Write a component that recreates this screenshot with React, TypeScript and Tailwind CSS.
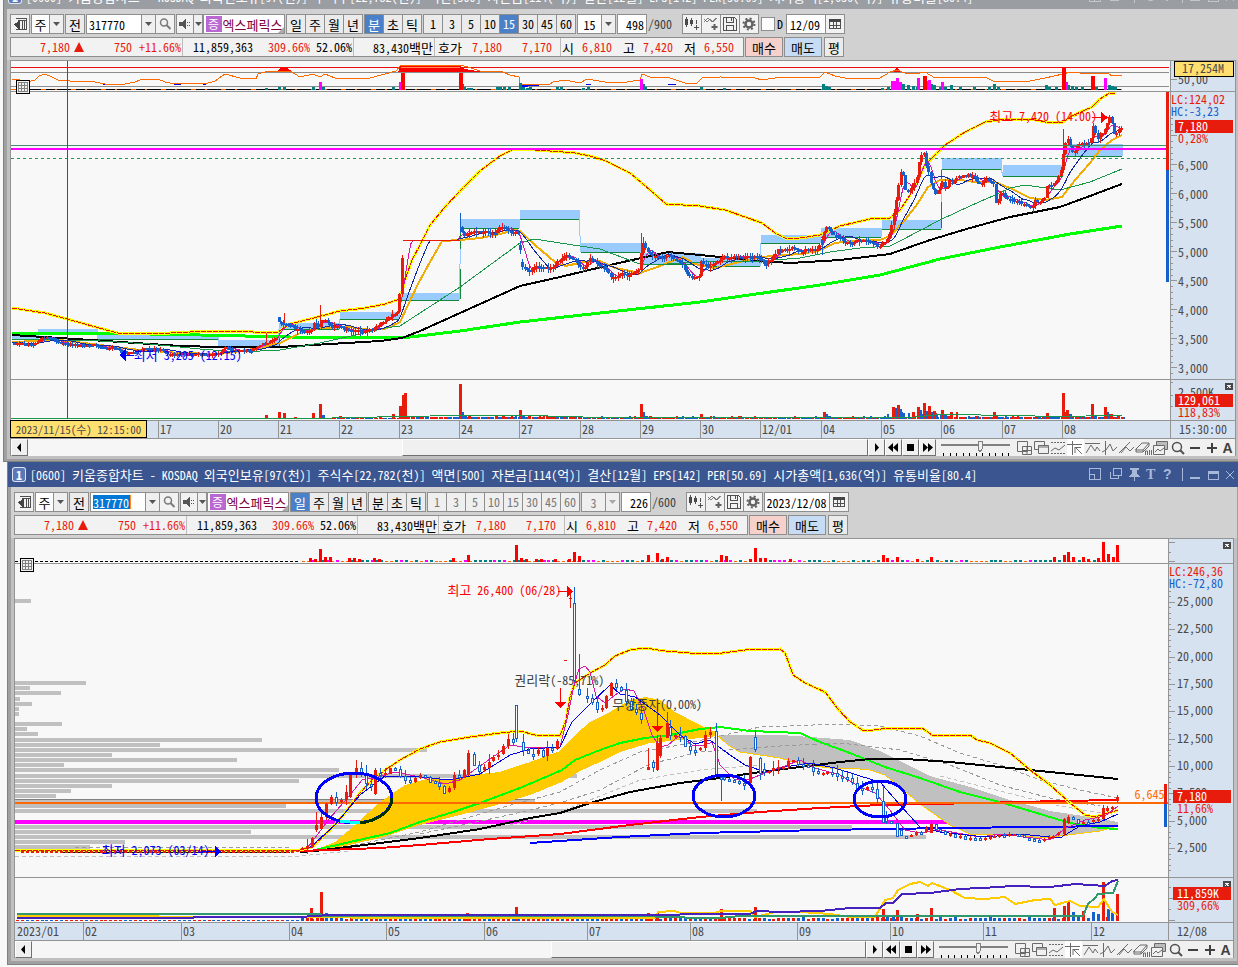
import React from 'react';

type Bar = [number, number];

const MONO = "font-['Noto_Sans_Mono_CJK_KR','Noto_Sans_CJK_KR',monospace]";

const RED = '#e81c0c';
const BLUE = '#1460cc';

const parse = (s: string): Bar[] => s.split(' ').map((p) => p.split(',').map(Number) as Bar);
const at = (pts: Bar[], x: number) => {
  for (let i = 1; i < pts.length; i++) {
    if (x <= pts[i][0]) {
      const [x0, y0] = pts[i - 1];
      const [x1, y1] = pts[i];
      return y0 + ((y1 - y0) * (x - x0)) / (x1 - x0 || 1);
    }
  }
  return pts[pts.length - 1][1];
};
const noise = (i: number, k: number) => {
  const v = Math.sin(i * 12.9898 + k * 78.233) * 43758.5453;
  return (v - Math.floor(v)) * 2 - 1;
};

function Ko({ children }: { children: string }) {
  return (
    <>
      {children.split(/([가-힣]+)/).map((part, i) =>
        i % 2 ? <span key={i} className="text-[13px]">{part}</span> : part,
      )}
    </>
  );
}

function Band({ points }: { points: string }) {
  return (
    <g fill="none">
      <polyline points={points} stroke="#ffff00" strokeWidth="3" />
      <polyline points={points} stroke="#e01010" strokeWidth="1" strokeDasharray="5 1" />
    </g>
  );
}

function Bars({ data, base, color, w = 3 }: { data: string; base: number; color: string; w?: number }) {
  return (
    <g fill={color}>
      {parse(data).map(([x, h], i) => (
        <rect key={i} x={x - 1} y={base - h} width={w} height={h} />
      ))}
    </g>
  );
}

/* ---------- 15 minute chart ---------- */

const intraday = parse(
  '12,343 20,343 35,344 39,339 47,337 55,340 62,343 75,345 97,345 100,347 118,348 120,354 123,352 135,352 145,348 160,349 168,354 190,354 215,354 222,352 225,346 232,350 250,351 257,346 268,342 278,337 279,318 283,325 287,323 295,328 303,331 312,331 314,322 318,326 320,323 324,320 330,326 338,326 345,330 360,331 372,330 380,324 388,318 397,312 399,300 401,270 403,240 459,240 460,218 462,231 465,236 468,232 480,231 490,233 497,231 500,227 505,229 512,232 519,232 520,250 521,265 530,271 535,266 545,268 553,268 556,262 562,258 566,255 572,257 577,263 583,270 590,258 596,264 604,268 610,276 615,278 621,273 627,276 634,272 640,270 641,248 643,244 648,253 655,257 662,257 670,256 680,262 687,273 692,278 700,276 701,262 708,266 716,262 722,257 735,257 748,256 760,258 762,264 766,264 772,257 777,250 785,250 792,248 800,252 808,249 818,250 820,244 826,226 832,233 838,237 845,243 852,243 862,239 870,241 878,246 885,241 888,235 891,228 893,215 896,200 899,180 901,168 903,175 905,190 910,192 915,182 918,175 920,155 924,153 925,160 928,172 932,187 936,194 942,182 946,190 950,180 956,178 962,176 970,175 980,182 985,180 992,182 995,190 996,208 1000,192 1006,196 1012,200 1020,202 1028,205 1032,208 1036,200 1044,200 1047,185 1052,185 1058,178 1061,170 1064,145 1068,140 1073,155 1078,145 1085,144 1090,145 1093,125 1098,138 1103,135 1108,118 1110,117 1113,130 1115,138 1118,130 1122,127',
);
const STEP = 2.32;
const closes: Bar[] = Array.from({ length: 479 }, (_, i) => {
  const x = 12 + i * STEP;
  const amp = x > 402 && x < 460 ? 0 : x < 280 ? 0.7 : x > 880 ? 2 : 1.2;
  return [x, at(intraday, x) + noise(i, 1) * amp] as Bar;
});
const average = (src: Bar[], n: number) =>
  src
    .map(([x], i) => {
      const part = src.slice(Math.max(0, i - n + 1), i + 1);
      return `${x.toFixed(1)},${(part.reduce((a, p) => a + p[1], 0) / part.length).toFixed(1)}`;
    })
    .join(' ');
/* overnight gaps: the first bar of these sessions has a small body */
const isGap = (x: number) => [279, 460, 520].some((g) => Math.abs(g - x) < 3.5);

const clouds = [
  [12, 38, 334, 339], [38, 97, 329, 334], [98, 218, 334, 339], [219, 278, 340, 346], [279, 339, 323, 329],
  [340, 399, 312, 319], [401, 459, 293, 300], [461, 519, 219, 228], [520, 579, 210, 219], [581, 640, 243, 252],
  [641, 700, 253, 264], [701, 760, 258, 266], [761, 820, 235, 243], [821, 881, 228, 237], [882, 941, 220, 229],
  [942, 1001, 158, 169], [1003, 1061, 165, 176], [1063, 1122, 144, 156],
];

const ribbon =
  '12,79 20,80 27,82 35,80 39,76 45,74 52,77 58,80 70,81 95,82 105,84 120,85 135,82 140,80 158,79 165,82 175,84 190,83 205,84 215,81 222,76 225,74 240,78 256,79 258,74 268,71 290,71 300,77 313,74 320,77 325,74 335,78 350,79 370,78 385,74 396,71 400,66 403,65 460,65 468,67 480,71 500,71 510,75 519,77 520,85 525,84 550,84 553,82 565,80 580,83 587,79 605,82 620,83 640,80 642,74 650,77 670,78 685,83 697,83 702,78 720,77 755,78 762,80 775,78 800,77 820,77 825,72 835,76 850,79 880,78 890,72 897,70 905,73 915,74 925,72 935,78 960,77 985,77 995,82 1005,81 1030,81 1045,78 1063,74 1070,72 1090,74 1108,73 1112,76 1122,75';

function IntradayPlot() {
  const cloudLine = clouds.map(([a, b, , y]) => `${a},${y} ${b},${y}`).join(' ');
  return (
    <svg viewBox="11 61 1159 359" preserveAspectRatio="none" className="block h-[359px] w-full" shapeRendering="crispEdges" role="img" aria-label="15분 차트">
      <path d="M11 67.5H1169" stroke="#e81010" />
      <path d="M11 72.5H1169M11 86.5H1169" stroke="#8c8c8c" />
      <path d="M11 89.5H1122" stroke="#000" />
      <path d="M11 89.5H1122" stroke="#ff6a00" strokeDasharray="5 9 2 14" />
      <polygon points="398,72 401,65 459,65 462,68 470,70 485,72" fill="#ff0000" />
      <polygon points="277,71 281,68 287,68 292,71" fill="#ff0000" />
      <polygon points="891,72 897,68 902,72" fill="#ff0000" />
      <path d="M401 67.5H460" stroke="#ff8a50" />
      <polygon points="520,84 552,84 535,86 521,87" fill="#0000ff" />
      <path d="M103 84.5h4m8 0h6m53 0h7m22 0h3M586 84.5h5M668 84.5h8" stroke="#0000e0" />
      <polyline points={ribbon} fill="none" stroke="#ff6a00" />
      <Bars base={90} color="#008080" data="266,2 279,3 284,3 313,3 323,3 393,3 462,6 464,3 468,2 471,2 497,3 500,3 504,3 509,3 520,7 523,3 527,2 530,3 557,3 561,3 583,2 588,3 643,6 645,3 701,3 724,2 823,6 826,4 829,3 882,2 888,3 903,6 908,5 913,4 917,3 931,6 934,5 940,3 945,3 951,5 960,3 974,3 989,3 994,6 998,3 1046,5 1049,3 1056,3 1068,5 1072,4 1076,3 1082,3 1096,3 1109,5 1112,4 1115,3" />
      <Bars base={90} color="#ff00ff" data="320,8 400,8 641,11 892,9 895,9 897,12 900,8 918,12 926,9 929,10 942,8 1066,8 1105,12" />
      <Bars base={90} color="#ff0000" w={4} data="402,17 460,17 924,14 1063,23 1092,14" />
      <path d="M11 91.5H1170M11 379.5H1170" stroke="#949494" />

      {clouds.map(([a, b, t, y]) => (
        <rect key={a} x={a} y={t} width={b - a + 1} height={y - t} fill="#9acbff" />
      ))}
      <polyline points={cloudLine} fill="none" stroke="#9acbff" />
      {clouds.map(([a, b, , y]) => (
        <path key={b} d={`M${a} ${y + 0.5}H${b}`} stroke="#108838" />
      ))}
      <path d="M279.500 329v18M460.500 229v20m0 20v30M941.500 170v12m0 20v26M1062.500 157v20" stroke="#108838" />
      <polyline points="12,333 100,333 200,335 290,337 402,338 460,331 520,322 600,313 700,302 820,285 880,275 940,259 1000,247 1070,234 1122,226" fill="none" stroke="#00ff00" strokeWidth="3" />
      <polyline points="12,335 60,338 120,342 180,346 220,347 280,347 330,344 380,341 402,338 420,331 460,313 520,286 560,277 610,265 650,256 668,252 700,255 760,261 790,263 840,260 890,254 930,240 970,228 1010,217 1060,207 1090,196 1122,184" fill="none" stroke="#000" strokeWidth="2" />
      <polyline points="12,342 60,340 100,345 140,350 180,353 220,354 260,348 280,343 300,333 320,328 350,327 370,330 385,329 400,322 408,305 418,284 430,262 442,241 460,240 480,238 500,234 515,230 520,231 535,245 555,262 565,266 585,262 600,261 615,268 640,273 660,266 682,257 695,264 715,268 735,263 760,257 800,254 818,251 835,243 860,240 880,240 890,236 905,220 918,203 928,187 940,180 960,180 975,182 995,182 1010,188 1030,198 1045,200 1062,197 1075,180 1090,163 1100,150 1112,140 1122,135" fill="none" stroke="#f0ac00" strokeWidth="2" />
      <polyline points="12,339 100,341 150,344 200,349 240,352 280,350 320,343 360,334 385,328 400,326 420,313 460,287 490,265 520,243 534,239 560,243 600,249 637,263 650,265 700,262 760,261 800,258 830,252 860,248 890,246 900,241 940,220 970,206 995,195 1010,188 1025,185 1060,190 1090,182 1122,169" fill="none" stroke="#189848" />
      <Band points="12,308 45,313 67,319 110,331 118,333 170,333 210,331 235,331 270,333 278,332 290,324 310,319 325,315 340,311 365,308 385,304 400,299 405,280 412,260 420,245 430,225 445,207 460,191 480,171 500,156 512,150 520,149 550,151 575,153 590,156 606,161 630,173 650,190 666,204 700,206 725,210 745,217 762,223 775,233 787,239 800,238 820,235 840,226 870,219 890,218 900,210 912,192 925,165 945,145 965,132 985,122 1005,119 1030,119 1045,122 1063,122 1070,117 1085,110 1092,107 1100,99 1108,94 1115,93" />
      <polyline points={average(closes, 5)} fill="none" stroke="#d818a8" />
      <polyline points={average(closes, 13)} fill="none" stroke="#1428a0" />
      {closes.map(([x, c], i) => {
        if (i === 0 || (x > 404 && x < 460)) return null;
        const prev = closes[i - 1][1];
        const o = isGap(x) && Math.abs(c - prev) > 7 ? c - 5 : prev;
        const up = c <= o;
        const top = Math.min(c, o);
        const h = Math.max(2, Math.abs(c - o));
        const wick = Math.abs(noise(i, 3)) * (x < 280 ? 2 : 4);
        return (
          <g key={i} fill={up ? RED : BLUE}>
            <rect x={x} y={top - wick} width="1" height={h + wick * 2} />
            <rect x={x - 1} y={top} width="3" height={h} />
          </g>
        );
      })}
      <path d="M402.500 240.500H460M266.500 333v12M284.500 313v10M320.500 305v20M641.500 233v20" stroke={RED} fill="none" />
      <path d="M460.500 213v20M643.500 237v12M822.500 240v15M1063.500 129v30" stroke={BLUE} />
      <path d="M11 145.500H1166" stroke="#409070" />
      <path d="M11 149H1166" stroke="#ff00ff" strokeWidth="2" />
      <path d="M11 158.500H1166" stroke="#209858" strokeDasharray="3 3" />
      <rect x="1166" y="92" width="3" height="78" fill={RED} />
      <rect x="1166" y="170" width="3" height="112" fill={BLUE} />
      <path d="M1092 117.500h12" stroke="#ff0000" />
      <path d="M1101 112v11l7-5.500z" fill="#ff0000" />
      <path d="M126 355.500h8" stroke="#0000ff" />
      <path d="M126 349v12l-7-6z" fill="#0000ff" />

      {closes.map(([x], i) =>
        i % 2 ? null : <rect key={i} x={x} y={x > 400 ? 417 : 418} width="4" height={x > 400 ? 2 : 1} fill={noise(i, 8) > 0 ? RED : BLUE} />,
      )}
      {closes.map(([x], i) => {
        if (x < 460 || i % 3 === 0) return null;
        const h = Math.abs(noise(i, 5)) * (x > 880 && x < 960 ? 6 : 2) + 1;
        return <rect key={i} x={x} y={419 - h} width="2" height={h} fill={noise(i, 6) > 0 ? RED : BLUE} />;
      })}
      <Bars base={419} color={BLUE} data="287,1 323,4 462,7 465,3 523,4 643,7 646,3 826,5 829,3 895,11 900,10 903,6 920,9 927,8 931,7 936,4 945,4 1065,7 1070,5 1095,4 1107,7 1110,5" />
      <Bars base={419} color={RED} data="257,1 266,4 279,7 284,6 295,2 313,6 320,15 340,3 380,3 393,5 400,13 403,24 405,26 460,35 469,4 496,4 503,3 520,9 529,3 641,15 650,3 701,5 724,2 761,2 775,2 824,7 893,12 898,14 913,7 918,12 924,16 929,13 934,8 942,9 951,7 994,7 1047,6 1063,26 1067,9 1092,15 1105,12 1111,5 1118,3" />
      <polyline points="11,418.500 310,418.500 400,416.500 460,415.500 530,415.500 600,417.500 820,417.500 910,417.500 940,414.500 1020,415.500 1050,416.500 1122,415.500" fill="none" stroke="#189848" />
      <path d="M67.500 61V419" stroke="#e81010" />
    </svg>
  );
}

/* ---------- daily chart ---------- */

const daily = parse(
  '17,851 290,851 300,849 306,847 311,838 316,828 321,815 326,805 331,797 336,802 341,800 345,797 350,774 354,768 359,769 364,780 369,790 374,772 379,774 384,776 389,767 394,768 399,776 404,777 408,786 413,779 418,775 423,777 433,782 438,783 443,792 448,791 453,775 458,778 463,773 468,753 472,760 477,772 482,768 487,765 492,758 497,756 502,748 507,738 511,746 516,738 521,749 526,750 531,757 536,746 541,758 546,748 551,749 556,747 574,682 579,692 584,700 589,698 594,708 599,711 604,703 609,688 613,679 618,690 623,691 628,707 638,714 643,723 646,768 653,770 658,742 662,737 667,723 672,742 677,730 682,741 688,750 697,751 702,745 706,731 711,732 716,773 721,780 726,778 731,781 741,783 746,785 750,758 755,760 760,772 765,773 770,770 775,766 785,767 790,757 795,761 800,765 806,764 814,773 820,775 824,772 829,771 835,775 843,778 848,778 853,785 863,790 868,786 873,790 878,800 883,822 888,820 893,822 898,836 903,836 912,834 917,830 922,832 931,824 936,829 941,832 950,835 961,837 970,839 980,839 990,836 1000,834 1015,835 1025,838 1040,840 1050,838 1058,834 1064,820 1068,816 1078,824 1083,822 1090,820 1098,819 1103,809 1108,808 1113,806 1117,799',
);
const dayCloses: Bar[] = Array.from({ length: 225 }, (_, i) => {
  const x = 17 + i * 4.912;
  return [x, at(daily, x) + (x > 390 ? noise(i, 2) * 1.2 : 0)] as Bar;
});

/* x, high, low, body top, body bottom, rising */
const bigDays: [number, number, number, number, number, boolean][] = [
  [312, 837, 848, 838, 847, true], [316, 812, 832, 825, 830, true], [321, 810, 830, 817, 829, true],
  [326, 803, 820, 804, 817, true], [350, 772, 798, 775, 797, true], [375, 768, 795, 770, 794, true],
  [516, 705, 742, 705, 738, false], [468, 750, 776, 753, 775, true], [574, 587, 682, 603, 680, false],
  [579, 654, 696, 689, 694, false], [570, 590, 608, 598, 599, true], [565, 660, 661, 660, 661, true],
  [648, 748, 770, 767, 770, true], [653, 760, 772, 762, 767, false], [657, 735, 771, 743, 770, true],
  [667, 712, 738, 723, 738, true], [716, 723, 775, 731, 774, false], [721, 776, 801, 777, 779, false],
  [750, 756, 786, 757, 783, true], [755, 730, 752, 737, 749, false], [760, 757, 780, 758, 773, false],
  [883, 786, 823, 801, 822, false], [897, 820, 837, 823, 836, false], [931, 820, 833, 824, 833, true],
  [1064, 818, 836, 819, 834, true], [1103, 805, 820, 808, 819, true], [1117, 795, 803, 797, 801, true],
];

const profile =
  '601,31 683,86 688,30 693,61 699,20 704,32 709,19 714,19 724,62 729,27 734,38 740,262 745,160 750,427 755,112 760,237 765,64 770,339 776,577 781,299 786,112 791,71 796,56 801,535 806,286 811,757 827,852 832,251 837,926 842,125 847,90';

function DailyPlot() {
  return (
    <svg viewBox="15 539 1153 383" preserveAspectRatio="none" className="block h-[383px] w-full" shapeRendering="crispEdges" role="img" aria-label="일봉 차트">
      <path d="M15 561.500H300" stroke="#000" strokeDasharray="3 2" />
      {dayCloses.map(([x], i) => {
        if (x < 298) return null;
        const c = ['#008080', '#ff6a00', '#ff00ff', '#008080', '#ff6a00'][Math.floor((noise(i, 4) + 1) * 2.49)];
        const h = c === '#ff6a00' ? 1 : 2;
        return <rect key={i} x={x} y={562 - h} width="3" height={h} fill={c} />;
      })}
      <Bars base={562} color="#ff0000" data="310,4 315,3 320,13 325,5 330,5 349,4 354,4 359,3 374,4 379,3 453,4 468,7 516,17 521,4 526,3 536,3 541,3 555,3 569,3 574,10 579,6 648,7 657,9 662,3 667,5 721,7 726,6 750,3 755,14 760,4 765,4 790,3 883,7 887,4 897,5 917,3 931,5 1054,5 1064,7 1068,10 1073,5 1083,5 1088,3 1098,4 1103,20 1108,8 1113,5 1117,17" />
      <path d="M15 563.500H1168M15 877.500H1168" stroke="#949494" />
      {parse(profile).map(([y, end]) => (
        <rect key={y} x="15" y={y - 2} width={end - 15} height="4" fill="#c0c0c0" />
      ))}
      <path d="M15 799.500H535" stroke="#808080" />
      <path d="M15 822H955" stroke="#ff00ff" strokeWidth="4" />
      <polygon points="315,850 335,842 355,825 380,802 405,785 430,778 450,780 470,775 500,772 530,762 560,751 575,735 590,722 610,712 630,700 645,697 660,700 675,712 700,725 718,733 718,736 690,739 650,743 620,752 600,762 580,771 562,782 530,795 500,804 460,815 420,825 380,838 340,847" fill="#ffcb00" />
      <polygon points="718,735 740,735 780,735 810,737 850,740 880,751 930,776 970,787 1010,800 1050,811 1090,817 1118,822 1118,826 1100,831 1060,836 1040,838 1010,834 970,834 950,825 920,804 900,787 885,775 870,770 850,768 830,768 800,764 780,758 760,755 740,752 728,745" fill="#c0c0c0" />
      <polyline points="715,733 728,745 740,752 760,755 780,758 800,764 830,768 850,768 870,770 885,775 900,787 920,804 950,825 970,834 1010,834 1040,838 1060,836 1100,831 1118,826" fill="none" stroke="#ffcb00" />
      <g fill="none" stroke="#9a9a9a" strokeDasharray="4 3">
        <polyline points="340,848 420,832 500,808 560,792 600,770 640,752 680,745 760,727 840,724 880,726 920,736 960,753 1000,765 1040,780 1080,790 1118,798" />
        <polyline points="420,834 500,817 560,803 600,790 650,764 700,752 780,746 840,743 900,750 950,765 1000,785 1050,798 1100,806" />
        <polyline points="420,838 520,823 570,808 640,780 700,770 760,765" stroke="#c0c0c0" />
        <polyline points="75,847 290,847" />
        <polyline points="15,856 300,856 350,851" stroke="#c0c0c0" />
        <polyline points="940,776 1000,791 1060,806 1118,816" stroke="#c0c0c0" />
      </g>
      <polyline points="315,850 350,842 390,833 420,822 450,813 480,803 520,788 562,770 575,760 600,750 620,743 645,738 670,735 700,729 720,727 750,731 800,733 820,742 850,753 885,767 920,778 960,792 1000,802 1040,814 1070,823 1100,828 1118,829" fill="none" stroke="#00ff00" strokeWidth="2" />
      <polyline points="300,852 315,851 380,843 420,838 480,829 530,818 560,813 590,803 630,792 680,783 720,778 760,772 800,767 840,762 870,759 905,759 950,762 1000,767 1050,772 1118,779" fill="none" stroke="#000" strokeWidth="2" />
      <polyline points="15,851 300,851 380,848 420,845 490,839 560,834 630,825 700,817 760,812 820,808 880,805 980,803 1060,801 1118,800" fill="none" stroke="#ff0000" strokeWidth="2" />
      <polyline points="530,843 620,837 700,833 820,830 950,828 1118,826" fill="none" stroke="#0000ff" strokeWidth="2" />
      <polyline points="60,852.500 290,852.500" fill="none" stroke="#000" />
      <path d="M15 803H1168" stroke="#ff6a00" strokeWidth="2" />
      <Band points="15,850 300,850 312,847 330,830 345,813 360,793 372,780 385,770 400,760 420,749 440,742 470,737 500,733 520,731 535,735 560,736 566,720 570,697 575,683 590,673 605,665 615,656 630,650 645,648 665,651 690,653 715,654 745,650 780,649 785,653 793,675 805,683 825,692 838,709 850,722 864,731 890,728 922,728 932,735 970,735 977,740 990,743 1010,753 1030,770 1050,785 1070,803 1085,815 1095,817 1105,814 1118,810" />
      <polyline points="308,847 330,818 350,795 362,780 375,778 395,772 420,777 445,784 460,780 480,766 510,745 530,748 560,747 568,715 574,685 579,669 585,666 590,672 596,696 605,703 615,695 625,689 634,691 643,708 652,735 660,747 668,745 680,735 692,745 705,745 712,742 720,765 735,780 750,779 770,771 785,766 800,760 815,768 840,775 860,787 875,793 890,810 905,830 920,833 940,830 980,837 1000,834 1050,840 1066,828 1085,820 1105,816 1118,806" fill="none" stroke="#d818a8" />
      <polyline points="308,849 335,825 360,795 385,776 420,777 450,780 480,774 510,755 530,749 560,747 572,722 590,704 610,685 620,694 635,697 660,715 680,735 695,744 710,740 730,755 745,765 765,772 785,767 810,763 835,768 860,776 880,782 900,805 920,827 940,832 985,837 1020,834 1060,838 1080,826 1100,822 1118,814" fill="none" stroke="#0000e0" />
      {dayCloses.map(([x, c], i) => {
        if (i === 0 || (x > 558 && x < 582) || (x > 642 && x < 660) || (x > 713 && x < 724)) return null;
        if (bigDays.some((b) => Math.abs(b[0] - x) < 2.4)) return null;
        const o = dayCloses[i - 1][1];
        const up = c <= o;
        const top = Math.round(Math.min(c, o));
        const h = Math.max(2, Math.round(Math.abs(c - o)));
        const wick = x < 300 ? 0 : Math.abs(noise(i, 9)) * (x > 900 ? 2 : 8);
        const px = Math.round(x);
        return (
          <g key={i}>
            <rect x={px} y={top - wick} width="1" height={h + wick * 1.7} fill={up ? RED : BLUE} />
            {up ? (
              <rect x={px - 1} y={top} width="3" height={h} fill={RED} />
            ) : (
              <rect x={px - 0.5} y={top + 0.5} width="2" height={h} fill="#f8f8f8" stroke={BLUE} />
            )}
          </g>
        );
      })}
      {bigDays.map(([x, hi, lo, t, b, up]) => (
        <g key={x}>
          <rect x={x} y={hi} width="1" height={lo - hi} fill={up ? RED : BLUE} />
          {up ? <rect x={x - 1} y={t} width="3" height={b - t} fill={RED} /> : <rect x={x - 0.5} y={t + 0.5} width="2" height={b - t} fill="#f8f8f8" stroke={BLUE} />}
        </g>
      ))}
      <g fill="none" stroke="#0000ff" strokeWidth="3">
        <ellipse cx="354" cy="798" rx="38" ry="25" />
        <ellipse cx="724" cy="796" rx="31" ry="21" />
        <ellipse cx="880" cy="799" rx="26" ry="18" />
      </g>
      <path d="M392 798a38 25 0 0 1-34 25" fill="none" stroke="#003000" strokeWidth="3" />
      <path d="M340 821l20 2" stroke="#00ffff" strokeWidth="3" />
      <path d="M558 591.500h12M560.500 688v15M657.500 705v24" stroke="#ff0000" />
      <path d="M567 586v11l6-5.500zM555 702h11l-5.500 6zM652 726h11l-5.500 6z" fill="#ff0000" />
      <path d="M201 851.500h18" stroke="#0000ff" />
      <path d="M215 846v11l6-5.500z" fill="#0000ff" />
      <rect x="1164" y="784" width="3" height="20" fill={RED} />
      <rect x="1164" y="804" width="3" height="23" fill={BLUE} />

      {dayCloses.map(([x], i) => {
        const h = x < 298 ? 1 : Math.round(2 + Math.abs(noise(i, 7)) * 2);
        return <rect key={i} x={x - 1} y={921 - h} width="3" height={h} fill={noise(i, 6) > 0 ? RED : BLUE} />;
      })}
      <Bars base={921} color={BLUE} data="326,8 331,7 887,6 893,4 1073,9 1078,5 1093,9 1098,7 1108,12 1112,9" />
      <Bars base={921} color={RED} data="311,13 321,29 467,8 516,14 648,8 657,8 721,12 755,14 883,12 897,11 917,7 931,13 1054,13 1064,15 1068,19 1083,10 1103,39 1117,27" />
      <g fill="none" strokeWidth="2">
        <polyline stroke="#ffcb00" points="17,916 300,917 400,918 655,918 658,912 675,911 680,913 715,913 720,911 750,911 755,917 775,912 800,912 830,914 850,917 875,917 885,900 893,898 898,890 910,884 920,882 928,886 932,883 950,890 965,898 985,899 1005,897 1015,904 1035,900 1050,899 1055,905 1070,901 1080,906 1098,907 1104,899 1112,912 1118,915" />
        <polyline stroke="#30986c" points="17,914 320,914 322,916 640,916 700,918 720,918 740,916 1083,916 1088,904 1095,898 1098,894 1113,893 1118,881" />
        <polyline stroke="#4422bb" points="17,918 193,918 194,917 300,917 330,915 560,915 660,915 700,914 750,914 757,911 780,912 820,911 850,908 880,908 886,903 893,903 902,894 930,893 960,889 1000,887 1010,886 1050,887 1075,884 1105,886 1112,881 1118,880" />
      </g>
    </svg>
  );
}

/* ---------- value axes ---------- */

function CloseMark({ x, y }: { x: number; y: number }) {
  return (
    <g>
      <rect x={x} y={y} width="8" height="7" fill="#484848" />
      <path d={`M${x + 2} ${y + 2}l4 3m0-3l-4 3`} stroke="#f0f0f0" />
    </g>
  );
}

function AxisSvg({ top, height, children }: { top: number; height: number; children: React.ReactNode }) {
  return (
    <svg viewBox={`0 ${top} 64 ${height}`} width="64" height={height} className={`block shrink-0 bg-[#d7e2f0] ${MONO}`} fontSize="12" shapeRendering="crispEdges">
      {children}
    </svg>
  );
}

function IntradayAxis() {
  return (
    <AxisSvg top={61} height={359}>
      <path d="M0 91.500H64M0 379.500H64" stroke="#949494" />
      <path d="M0 79.500h6M0 395.500h2M0 406.500h2M0 382.500h2" stroke="#949494" />
      <text x="7" y="84" fill="#4a4a4a">50,00</text>
      <rect x="3.500" y="61.500" width="59" height="15" fill="#ffdf70" stroke="#000" />
      <text x="11" y="73" fill="#4a4a4a">17,254M</text>
      <text x="0" y="104" fill={RED}>LC:124,02</text>
      <text x="0" y="116" fill={BLUE}>HC:-3,23</text>
      {Array.from({ length: 45 }, (_, i) => (
        <path key={i} d={`M0 ${Math.round(118 + i * 5.8)}.500h${i % 5 === 3 ? 6 : 2}`} stroke="#949494" />
      ))}
      {['6,500', '6,000', '5,500', '5,000', '4,500', '4,000', '3,500', '3,000'].map((t, i) => (
        <text key={t} x="7" y={170 + i * 29} fill="#4a4a4a">{t}</text>
      ))}
      <rect x="4" y="120" width="58" height="13" fill={RED} />
      <text x="7" y="131" fill="#fff">7,180</text>
      <text x="7" y="143" fill={RED}>0,28%</text>
      <text x="7" y="397" fill="#4a4a4a">2,500K</text>
      <CloseMark x={54} y={383} />
      <rect x="4" y="394" width="58" height="13" fill={RED} />
      <text x="7" y="405" fill="#fff">129,061</text>
      <text x="7" y="417" fill={RED}>118,83%</text>
    </AxisSvg>
  );
}

function DailyAxis() {
  return (
    <AxisSvg top={539} height={383}>
      <path d="M0 563.500H64M0 877.500H64" stroke="#949494" />
      <path d="M0 542.500h6M0 552.500h2M0 561.500h6M0 887.500h2M0 898.500h6M0 909.500h2M0 920.500h6" stroke="#949494" />
      <CloseMark x={54} y={542} />
      <text x="0" y="576" fill={RED}>LC:246,36</text>
      <text x="0" y="588" fill={BLUE}>HC:-72,80</text>
      {Array.from({ length: 52 }, (_, i) => (
        <path key={i} d={`M0 ${Math.round(591 + i * 5.47)}.500h${i % 5 === 2 ? 6 : 2}`} stroke="#949494" />
      ))}
      {['25,000', '22,500', '20,000', '17,500', '15,000', '12,500', '10,000', '7,500', '5,000', '2,500'].map((t, i) => (
        <text key={t} x="8" y={606 + Math.round(i * 27.35)} fill="#4a4a4a">{t}</text>
      ))}
      <rect x="4" y="790" width="58" height="13" fill={RED} />
      <text x="8" y="801" fill="#fff">7,180</text>
      <text x="8" y="813" fill={RED}>11,66%</text>
      <CloseMark x={54} y={881} />
      <rect x="4" y="887" width="58" height="13" fill={RED} />
      <text x="8" y="898" fill="#fff">11,859K</text>
      <text x="8" y="910" fill={RED}>309,66%</text>
    </AxisSvg>
  );
}

/* ---------- toolbar ---------- */

function Svg({ children, w = 16, label }: { children: React.ReactNode; w?: number; label?: string }) {
  return (
    <svg width={w} height="16" viewBox={`0 0 ${w} 16`} fill="none" stroke="#505050" shapeRendering="crispEdges" aria-label={label} className="shrink-0">
      {children}
    </svg>
  );
}

const BOX = 'flex h-5 shrink-0 items-center justify-center border border-[#8e8e8e]';
const CELL = '-ml-px first:ml-0';

function Arrow({ dim = false, w = 'w-[15px]' }: { dim?: boolean; w?: string }) {
  return (
    <button aria-label="목록" className={`${BOX} ${CELL} ${w} bg-[#efefef]`}>
      <svg width="7" height="4" viewBox="0 0 7 4" className="shrink-0"><path d="M0 0h7L3.500 4z" fill={dim ? '#a8a8a8' : '#555'} /></svg>
    </button>
  );
}

function Choice({ items, active, dim }: { items: string[]; active?: string; dim?: boolean }) {
  return (
    <div className="flex">
      {items.map((t) => (
        <button key={t} className={`${BOX} ${CELL} w-5 ${t === active ? 'bg-[#4a80c8] text-white' : dim ? 'bg-[#efefef] text-[#777]' : 'bg-[#ebebeb]'}`}>
          <Ko>{t}</Ko>
        </button>
      ))}
    </div>
  );
}

type Mode = { daily: boolean };

function Toolbar({ daily: d }: Mode) {
  return (
    <div className={`flex items-center text-[12px] leading-none text-black ${MONO}`}>
      <button aria-label="패널" className={`${BOX} w-5 bg-[#f2f2f2]`}>
        <Svg><path d="M4 2.500h10v11H4M6 4.500h8M10.500 5v8M12.500 5v8" /><path d="M8 4v10L2 8.500z" fill="#444" stroke="none" /></Svg>
      </button>
      <div className="ml-px flex">
        <button className={`${BOX} w-[19px] bg-white`}><Ko>주</Ko></button>
        <Arrow />
      </div>
      <button className={`${BOX} ml-px w-5 bg-[#ebebeb]`}><Ko>전</Ko></button>
      <div className="ml-px flex">
        <label className={`${BOX} w-14 bg-white`}>
          <input aria-label="종목코드" defaultValue="317770" className={d ? 'mr-3 h-[14px] w-[38px] border-r border-[#ff8a20] bg-[#0078d7] text-white' : 'mr-3 h-[14px] w-[38px] bg-white'} />
        </label>
        <Arrow />
        <button aria-label="검색" className={`${BOX} ${CELL} w-5 bg-[#f2f2f2]`}>
          <svg width="14" height="14" viewBox="0 0 14 14" fill="none" stroke="#7a7a7a" className="shrink-0"><circle cx="6" cy="5.500" r="3.500" strokeWidth="1.500" /><path d="M8.500 8l4 4" strokeWidth="2" /></svg>
        </button>
      </div>
      <div className="ml-px flex">
        <button aria-label="소리" className={`${BOX} w-[18px] bg-[#f2f2f2]`}>
          <Svg w={14}><path d="M1 6h3l4-4v12l-4-4H1z" fill="#555" stroke="none" /><path d="M9 6.500h4M9 9.500h4" strokeDasharray="1 1" /></Svg>
        </button>
        <Arrow w="w-[10px]" />
      </div>
      <div className={`${BOX} relative w-[82px] gap-px bg-white`}>
        <span className="flex h-4 w-4 shrink-0 items-center justify-center bg-[#b868d0] text-white">증</span>
        <span className="text-[13px] text-[#800040]">엑스페릭스</span>
        <svg width="6" height="6" className="absolute right-0 bottom-0"><path d="M6 0v6H0z" fill="#aaa" /></svg>
      </div>
      <div className="ml-px"><Choice items={['일', '주', '월', '년']} active={d ? '일' : undefined} /></div>
      <div className="ml-px"><Choice items={['분', '초', '틱']} active={d ? undefined : '분'} /></div>
      <div className="ml-px"><Choice items={['1', '3', '5', '10', '15', '30', '45', '60']} active={d ? undefined : '15'} dim={d} /></div>
      <div className="ml-px flex">
        <label className={`${BOX} w-[25px] ${d ? 'bg-[#efefef] text-[#777]' : 'bg-white'}`}>
          <input aria-label="주기" defaultValue={d ? '3' : '15'} className="h-[14px] w-4 bg-transparent text-center" />
        </label>
        <Arrow dim={d} />
      </div>
      <label className={`${BOX} ml-px w-[30px] bg-white`}>
        <input aria-label="표시 봉수" defaultValue={d ? '226' : '498'} className="h-[14px] w-6 bg-white text-right" />
      </label>
      <span className="ml-px w-[34px] text-[#404040]">{d ? '/600' : '/900'}</span>
      <div className="flex">
        <button aria-label="봉 추가" className={`${BOX} ${CELL} w-5 bg-[#f2f2f2]`}><Svg><path d="M1 3h3v6H1zM6 4h3v4H6z" fill="#444" stroke="none" /><path d="M2.500 1v10M7.500 2v8M12.500 4v4M12.500 9v5M10 11.500h5" /></Svg></button>
        <button aria-label="지표 추가" className={`${BOX} ${CELL} w-5 bg-[#f2f2f2]`}>
          <svg width="16" height="16" viewBox="0 0 16 16" fill="none" stroke="#606060" className="shrink-0"><path d="M1 6l4-4 4 4 4-4M1 3l3 3 3-3 3 3 4-4" strokeWidth=".8" /><path d="M11.500 8v6M8.500 11h6" strokeWidth="2" /></svg>
        </button>
        <button aria-label="저장" className={`${BOX} ${CELL} w-5 bg-[#f2f2f2]`}><Svg><path d="M1.500 1.500h11l2 2v11h-13zM4.500 2v4h7V2M4.500 14V9h7v5M9.500 2v3" /></Svg></button>
        <button aria-label="설정" className={`${BOX} ${CELL} w-5 bg-[#f2f2f2]`}>
          <svg width="14" height="14" viewBox="0 0 14 14" className="shrink-0"><circle cx="7" cy="7" r="3.500" fill="none" stroke="#606060" strokeWidth="2.500" /><circle cx="7" cy="7" r="5.500" fill="none" stroke="#606060" strokeWidth="2" strokeDasharray="2 2.320" /></svg>
        </button>
      </div>
      {!d && (
        <label className="ml-[2px] flex w-6 items-center gap-[2px]">
          <input type="checkbox" aria-label="D" className="h-[14px] w-[14px] shrink-0 appearance-none border border-[#8e8e8e] bg-white" />
          <span>D</span>
        </label>
      )}
      <div className="ml-px flex">
        <label className={`${BOX} bg-white ${d ? 'w-[66px]' : 'w-10'}`}>
          <input aria-label="날짜" defaultValue={d ? '2023/12/08' : '12/09'} className={`h-[14px] bg-white ${d ? 'w-[61px]' : 'w-8'}`} />
        </label>
        <button aria-label="달력" className={`${BOX} ${CELL} w-5 bg-[#f2f2f2]`}><Svg w={12}><path d="M0.500 4h11v8.500h-11zM1 9.500h10M4.500 6v6M7.500 6v6" /><path d="M0 3h12v3H0z" fill="#444" stroke="none" /></Svg></button>
      </div>
    </div>
  );
}

function Quote() {
  const R = 'text-right text-[#e81c0c]';
  return (
    <div className={`mt-[3px] flex items-center text-[12px] leading-none whitespace-nowrap text-black ${MONO}`}>
      <div className="flex h-5 w-[734px] items-center border border-[#8e8e8e] bg-[#f2f2f2]">
        <span className={`w-[59px] ${R}`}>7,180</span>
        <svg width="10" height="10" className="ml-1"><path d="M5 0l5 10H0z" fill="#e81c0c" /></svg>
        <span className={`w-12 ${R}`}>750</span>
        <span className={`w-[49px] ${R}`}>+11.66%</span>
        <span className="ml-px h-[18px] w-px bg-[#bcbcbc]" />
        <span className="w-[70px] text-right">11,859,363</span>
        <span className={`w-[57px] ${R}`}>309.66%</span>
        <span className="w-[42px] text-right">52.06%</span>
        <span className="ml-px h-[18px] w-px bg-[#bcbcbc]" />
        <span className="w-[79px] text-right"><Ko>83,430백만</Ko></span>
        <span className="ml-px h-[18px] w-px bg-[#bcbcbc]" />
        <span className="ml-[3px] w-6"><Ko>호가</Ko></span>
        <span className={`w-10 ${R}`}>7,180</span>
        <span className={`w-[50px] ${R}`}>7,170</span>
        <span className="ml-2 h-[18px] w-px bg-[#bcbcbc]" />
        <span className="ml-px w-3"><Ko>시</Ko></span>
        <span className={`w-[38px] ${R}`}>6,810</span>
        <span className="ml-[11px] w-3"><Ko>고</Ko></span>
        <span className={`w-[38px] ${R}`}>7,420</span>
        <span className="ml-[11px] w-3"><Ko>저</Ko></span>
        <span className={`w-[38px] ${R}`}>6,550</span>
      </div>
      <button className={`${BOX} ml-px w-[38px] bg-[#f6d0cb]`}><Ko>매수</Ko></button>
      <button className={`${BOX} ml-px w-[38px] bg-[#c6dcf4]`}><Ko>매도</Ko></button>
      <button className={`${BOX} ml-[2px] w-5 bg-[#ebebeb]`}><Ko>평</Ko></button>
    </div>
  );
}

/* ---------- bottom controls ---------- */

function Key({ label, children }: { label: string; children: React.ReactNode }) {
  return (
    <button aria-label={label} className="flex h-[17px] w-[17px] shrink-0 items-center justify-center border border-t-white border-r-[#707070] border-b-[#707070] border-l-white bg-[#f0f0f0]">
      <svg width="11" height="9" viewBox="0 0 11 9" fill="#000" className="shrink-0">{children}</svg>
    </button>
  );
}

const tools: [string, React.ReactNode][] = [
  ['창 추가', <path key="p" d="M1.500 1.500h10v10h-10zM6.500 6.500h9v8h-9zM11 7v7M7 10.500h8" />],
  ['창 복사', <><path d="M1.500 1.500h10v8h-10z" /><path d="M5.500 5.500h10v8h-10zM6 7h9" fill="#f0f0f0" /></>],
  ['영역', <><path d="M1 2.500h15M1 13.500h15" strokeDasharray="2 1" /><path d="M1 11l4-3 4 2 6-5" /></>],
  ['십자선', <><path d="M0 4.500h15M5.500 1v14" /><path d="M8 7l7 7M8 7v6M8 7.500h6" /></>],
  ['수평선', <path key="p" d="M1 3.500h15M2 13l5-8 4 6 2-4 3 4" />],
  ['수직선', <path key="p" d="M4.500 1v14M1 12l4-2 4-6 3 7 4-4" />],
  ['추세선', <path key="p" d="M1 13L12 2M3 13l5-6 4 4 4-4" />],
  ['지우개', <><path d="M1 9l6-6h7l-6 7H1zM1 9v3h7l6-6V3M8 10v2" /><path d="M10.500 15v-4h2v4M14.500 10v5M16.500 10v5" /></>],
  ['차트 겹침', <><path d="M4.500 1.500h11v8h-11z" fill="#bbb" /><path d="M1.500 5.500h11v9h-11z" fill="#f0f0f0" /><path d="M3 12l3-3 2 2 4-3" /></>],
];

function ScrollRow({ before, thumb }: { before: number; thumb: number }) {
  return (
    <div className="flex h-[17px] items-center overflow-hidden bg-[#f0f0f0]">
      <Key label="왼쪽으로"><path d="M7 0v9L3 4.500z" /></Key>
      <div className="flex h-[17px] min-w-0 flex-1 bg-[#f6f6f6]">
        <div style={{ flexGrow: before }} />
        <div style={{ flexGrow: thumb }} className="border border-t-white border-r-[#707070] border-b-[#707070] border-l-white bg-[#f0f0f0]" />
      </div>
      <Key label="오른쪽으로"><path d="M4 0v9l4-4.500z" /></Key>
      <Key label="뒤로"><path d="M5 0v9L0 4.500zM10 0v9L5 4.500z" /></Key>
      <Key label="정지"><path d="M2 1h7v7H2z" /></Key>
      <Key label="앞으로"><path d="M1 0v9l5-4.500zM6 0v9l5-4.500z" /></Key>
      <svg width="70" height="17" viewBox="0 0 70 17" className="ml-1 shrink-0" shapeRendering="crispEdges" aria-label="간격">
        <path d="M1 5.500h69" stroke="#808080" strokeWidth="2" />
        <path d="M38 2h4v8l-2 3-2-3z" fill="#f0f0f0" stroke="#808080" />
        {Array.from({ length: 11 }, (_, i) => (
          <path key={i} d={`M${Math.round(3 + i * 6.5)}.500 14v3`} stroke="#000" />
        ))}
      </svg>
      <div className="ml-[6px] flex shrink-0">
        {tools.map(([label, icon], i) => (
          <button key={label} aria-label={label} className={`flex h-[17px] w-[17px] items-center justify-center ${i === 3 ? 'bg-white' : ''}`}>
            <svg width="17" height="16" viewBox="0 0 17 16" fill="none" stroke="#6a6a6a" className="shrink-0">{icon}</svg>
          </button>
        ))}
        <button aria-label="돋보기" className="flex h-[17px] w-[17px] items-center justify-center"><svg width="14" height="14" fill="none" stroke="#505050" className="shrink-0"><circle cx="6" cy="6" r="4.500" strokeWidth="1.500" /><path d="M9 9l4 4" strokeWidth="2" /></svg></button>
        <button aria-label="축소" className="flex h-[17px] w-[17px] items-center justify-center"><svg width="10" height="10" className="shrink-0"><path d="M0 5h10" stroke="#404040" strokeWidth="2" /></svg></button>
        <button aria-label="확대" className="flex h-[17px] w-[17px] items-center justify-center"><svg width="10" height="10" className="shrink-0"><path d="M0 5h10M5 0v10" stroke="#404040" strokeWidth="2" /></svg></button>
        <button className="flex h-[17px] w-[15px] items-center justify-center font-['Liberation_Sans',sans-serif] text-[14px] leading-none font-bold text-[#404040]">A</button>
      </div>
    </div>
  );
}

/* ---------- window ---------- */

const TITLE =
  '[0600] 키움종합차트 - KOSDAQ 외국인보유[97(천)] 주식수[22,782(천)] 액면[500] 자본금[114(억)] 결산[12월] EPS[142] PER[50.69] 시가총액[1,636(억)] 유통비율[80.4]';

function TitleBar({ blue }: { blue: boolean }) {
  return (
    <div className={`flex items-end overflow-hidden ${blue ? 'h-[25px] bg-[#3a5590]' : 'h-[9px] bg-[#9a9da2]'}`}>
      <div className={`flex h-[25px] min-w-0 flex-1 shrink-0 items-center pr-1 pl-1 text-[12px] leading-none whitespace-nowrap text-white ${MONO}`}>
        <span className="flex h-[15px] w-[14px] shrink-0 items-center justify-center rounded-[3px] border border-white/80 bg-[#5a78b8] font-bold">1</span>
        <h2 className="ml-1 min-w-0 flex-1"><Ko>{TITLE}</Ko></h2>
        <svg width="146" height="17" viewBox="0 0 146 17" fill="none" stroke={blue ? '#a8b8d8' : '#c4c6ca'} strokeWidth="1" shapeRendering="crispEdges" className="shrink-0">
          <path d="M1.500 2.500h11v11h-11zM1.500 8.500h5v5M25.500 2.500h8v7h-8zM22.500 6v6.500h8V10M94.500 2v13M138 5l8 8m0-8l-8 8" />
          <path d="M102 12h10M121 6.500h9" strokeWidth="2" />
          <path d="M120.500 5.500h10v8h-10z" />
          <path d="M42 2h9v2h-2v4l3 2v1H41v-1l3-2V4h-2zM46 11h1v4h-1z" fill={blue ? '#a8b8d8' : '#c4c6ca'} stroke="none" />
          <text x="58" y="13" fontSize="14" fontWeight="bold" fill={blue ? '#a8b8d8' : '#c4c6ca'} stroke="none" className="font-['Liberation_Serif',serif]">T</text>
          <text x="75" y="13" fontSize="14" fontWeight="bold" fill={blue ? '#a8b8d8' : '#c4c6ca'} stroke="none" className="font-['Liberation_Sans',sans-serif]">?</text>
        </svg>
      </div>
    </div>
  );
}

function GridMark() {
  return (
    <svg width="14" height="14" viewBox="0 0 14 14" className="absolute top-[19px] left-[5px]" shapeRendering="crispEdges">
      <rect x=".5" y=".5" width="13" height="13" fill="#f0f0f0" stroke="#000" />
      <path d="M2.500 2.500h9v9h-9zM5.500 3v9M8.500 3v9M3 5.500h9M3 8.500h9" fill="none" stroke="#808080" />
    </svg>
  );
}

function Note({ x, y, color, children }: { x: number; y: number; color: string; children: string }) {
  return (
    <span className={`absolute leading-[14px] whitespace-nowrap ${color}`} style={{ left: `${x}%`, top: y }}>
      <Ko>{children}</Ko>
    </span>
  );
}

type Dates = { start: number; end: number; marks: [number, string][]; last: string; first?: string };

function DateRow({ start, end, marks, last, first }: Dates) {
  const span = end - start;
  return (
    <div className={`flex h-[19px] border-y border-[#949494] bg-[#d7e2f0] text-[12px] leading-[16px] text-[#4a4a4a] ${MONO}`}>
      <div className="relative flex min-w-0 flex-1">
        <span style={{ width: `${((marks[0][0] - start) / span) * 100}%` }} className="overflow-hidden pl-[2px]">{first}</span>
        {marks.map(([x, t], i) => (
          <span key={t} className="overflow-hidden border-l border-[#949494] pl-px" style={{ width: `${(((marks[i + 1]?.[0] ?? end) - x) / span) * 100}%` }}>
            {t}
          </span>
        ))}
        {!first && (
          <span className="absolute -top-px -left-px h-[18px] w-[137px] border border-black bg-[#ffdf70] text-center text-[11px] whitespace-nowrap text-[#4a4a4a]">2023/11/15(수) 12:15:00</span>
        )}
      </div>
      <div className="w-[65px] shrink-0 border-l border-[#949494] pl-2">{last}</div>
    </div>
  );
}

function ChartWindow({ daily: d }: Mode) {
  return (
    <section className={`border-b border-l border-[#808080] ${d ? 'ml-[7px]' : 'ml-[3px]'}`}>
      <TitleBar blue={d} />
      <div className={`border-b-[#a0a0a0] border-l-[3px] border-l-[#a0a0a0] bg-[#d1d1d1] ${d ? 'border-r border-b-[3px] border-r-[#a0a0a0]' : 'border-b-2'}`}>
        <div className="px-[3px] pt-[5px] pb-[3px]">
          <Toolbar daily={d} />
          <Quote />
        </div>
        <div className={`border-b-[3px] border-l-[3px] border-[#c0c0c0] ${d ? 'border-r-[3px]' : 'border-r-2'}`}>
          <div className="border-x border-t border-[#949494]">
            <div className="flex bg-[#f8f8f8]">
              <div className={`relative min-w-0 flex-1 overflow-hidden text-[12px] ${MONO}`}>
                {d ? <DailyPlot /> : <IntradayPlot />}
                <GridMark />
                {d ? (
                  <>
                    <Note x={37.5} y={44} color="text-[#ff0000]">최고 26,400 (06/28)</Note>
                    <Note x={43.3} y={134} color="text-[#404040]">권리락(-85,71%)</Note>
                    <Note x={51.8} y={158} color="text-[#404040]">무상증자(0,00%)</Note>
                    <Note x={7.5} y={304} color="text-[#0000ff]">최저 2,073 (03/14)</Note>
                    <Note x={97.1} y={248} color="text-[#ff6a00]">6,645</Note>
                  </>
                ) : (
                  <>
                    <Note x={84.4} y={48} color="text-[#ff0000]">최고 7,420 (14:00)</Note>
                    <Note x={10.6} y={287} color="text-[#0000ff]">최저 3,205 (12:15)</Note>
                  </>
                )}
              </div>
              <div className="shrink-0 border-l border-[#949494]">{d ? <DailyAxis /> : <IntradayAxis />}</div>
            </div>
            {d ? (
              <DateRow start={15} end={1168} first="2023/01" last="12/08" marks={[[83, '02'], [181, '03'], [289, '04'], [386, '05'], [484, '06'], [587, '07'], [690, '08'], [797, '09'], [890, '10'], [983, '11'], [1091, '12']]} />
            ) : (
              <DateRow start={11} end={1170} last="15:30:00" marks={[[158, '17'], [218, '20'], [278, '21'], [339, '22'], [399, '23'], [459, '24'], [519, '27'], [580, '28'], [640, '29'], [700, '30'], [760, '12/01'], [821, '04'], [881, '05'], [941, '06'], [1002, '07'], [1062, '08']]} />
            )}
            {d ? <ScrollRow before={520} thumb={313} /> : <ScrollRow before={374} thumb={465} />}
          </div>
        </div>
      </div>
    </section>
  );
}

export default function App() {
  return (
    <main className="flex min-h-screen flex-col bg-[#f8f8f8]">
      <ChartWindow daily={false} />
      <ChartWindow daily />
    </main>
  );
}
